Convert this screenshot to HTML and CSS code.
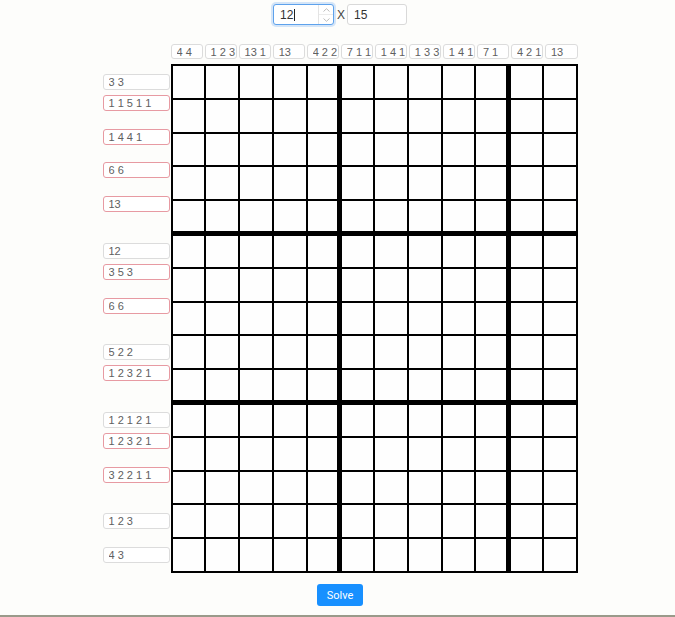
FILE: index.html
```html
<!DOCTYPE html>
<html>
<head>
<meta charset="utf-8">
<title>Nonogram</title>
<link rel="stylesheet" href="styles.css">
</head>
<body>
<div class="page">
  <div class="size-bar">
    <div class="num-input">
      <span class="num-val">12</span><span class="caret"></span>
      <span class="spin">
        <span class="spin-btn"><svg width="7" height="4" viewBox="0 0 7 4"><path d="M0.5 3.5 L3.5 0.7 L6.5 3.5" fill="none" stroke="#b5b5b5" stroke-width="0.9"/></svg></span>
        <span class="spin-btn"><svg width="7" height="4" viewBox="0 0 7 4"><path d="M0.5 0.5 L3.5 3.3 L6.5 0.5" fill="none" stroke="#b5b5b5" stroke-width="0.9"/></svg></span>
      </span>
    </div>
    <span class="times">X</span>
    <input class="size-input" type="text" value="15">
  </div>

  <div class="puzzle">
    <div class="corner"></div>
    <div class="col-clues">
      <input class="clue col-clue" value="4 4">
      <input class="clue col-clue" value="1 2 3">
      <input class="clue col-clue" value="13 1">
      <input class="clue col-clue" value="13">
      <input class="clue col-clue" value="4 2 2">
      <input class="clue col-clue" value="7 1 1">
      <input class="clue col-clue" value="1 4 1">
      <input class="clue col-clue" value="1 3 3">
      <input class="clue col-clue" value="1 4 1">
      <input class="clue col-clue" value="7 1">
      <input class="clue col-clue" value="4 2 1">
      <input class="clue col-clue" value="13">
    </div>

    <div class="row-clues">
      <div class="slot"><input class="clue row-clue" value="3 3"></div>
      <div class="slot"><input class="clue row-clue bad" value="1 1 5 1 1"><div class="err"></div></div>
      <div class="slot"><input class="clue row-clue bad" value="1 4 4 1"><div class="err"></div></div>
      <div class="slot"><input class="clue row-clue bad" value="6 6"><div class="err"></div></div>
      <div class="slot"><input class="clue row-clue bad" value="13"><div class="err"></div></div>
      <div class="slot"><input class="clue row-clue" value="12"></div>
      <div class="slot"><input class="clue row-clue bad" value="3 5 3"><div class="err"></div></div>
      <div class="slot"><input class="clue row-clue bad" value="6 6"><div class="err"></div></div>
      <div class="slot"><input class="clue row-clue" value="5 2 2"></div>
      <div class="slot"><input class="clue row-clue bad" value="1 2 3 2 1"><div class="err"></div></div>
      <div class="slot"><input class="clue row-clue" value="1 2 1 2 1"></div>
      <div class="slot"><input class="clue row-clue bad" value="1 2 3 2 1"><div class="err"></div></div>
      <div class="slot"><input class="clue row-clue bad" value="3 2 2 1 1"><div class="err"></div></div>
      <div class="slot"><input class="clue row-clue" value="1 2 3"></div>
      <div class="slot"><input class="clue row-clue" value="4 3"></div>
    </div>

    <div class="board">
      <div class="c"></div><div class="c"></div><div class="c"></div><div class="c"></div><div class="c"></div><div class="c"></div><div class="c"></div><div class="c"></div><div class="c"></div><div class="c"></div><div class="c"></div><div class="c"></div>
      <div class="c"></div><div class="c"></div><div class="c"></div><div class="c"></div><div class="c"></div><div class="c"></div><div class="c"></div><div class="c"></div><div class="c"></div><div class="c"></div><div class="c"></div><div class="c"></div>
      <div class="c"></div><div class="c"></div><div class="c"></div><div class="c"></div><div class="c"></div><div class="c"></div><div class="c"></div><div class="c"></div><div class="c"></div><div class="c"></div><div class="c"></div><div class="c"></div>
      <div class="c"></div><div class="c"></div><div class="c"></div><div class="c"></div><div class="c"></div><div class="c"></div><div class="c"></div><div class="c"></div><div class="c"></div><div class="c"></div><div class="c"></div><div class="c"></div>
      <div class="c"></div><div class="c"></div><div class="c"></div><div class="c"></div><div class="c"></div><div class="c"></div><div class="c"></div><div class="c"></div><div class="c"></div><div class="c"></div><div class="c"></div><div class="c"></div>
      <div class="c"></div><div class="c"></div><div class="c"></div><div class="c"></div><div class="c"></div><div class="c"></div><div class="c"></div><div class="c"></div><div class="c"></div><div class="c"></div><div class="c"></div><div class="c"></div>
      <div class="c"></div><div class="c"></div><div class="c"></div><div class="c"></div><div class="c"></div><div class="c"></div><div class="c"></div><div class="c"></div><div class="c"></div><div class="c"></div><div class="c"></div><div class="c"></div>
      <div class="c"></div><div class="c"></div><div class="c"></div><div class="c"></div><div class="c"></div><div class="c"></div><div class="c"></div><div class="c"></div><div class="c"></div><div class="c"></div><div class="c"></div><div class="c"></div>
      <div class="c"></div><div class="c"></div><div class="c"></div><div class="c"></div><div class="c"></div><div class="c"></div><div class="c"></div><div class="c"></div><div class="c"></div><div class="c"></div><div class="c"></div><div class="c"></div>
      <div class="c"></div><div class="c"></div><div class="c"></div><div class="c"></div><div class="c"></div><div class="c"></div><div class="c"></div><div class="c"></div><div class="c"></div><div class="c"></div><div class="c"></div><div class="c"></div>
      <div class="c"></div><div class="c"></div><div class="c"></div><div class="c"></div><div class="c"></div><div class="c"></div><div class="c"></div><div class="c"></div><div class="c"></div><div class="c"></div><div class="c"></div><div class="c"></div>
      <div class="c"></div><div class="c"></div><div class="c"></div><div class="c"></div><div class="c"></div><div class="c"></div><div class="c"></div><div class="c"></div><div class="c"></div><div class="c"></div><div class="c"></div><div class="c"></div>
      <div class="c"></div><div class="c"></div><div class="c"></div><div class="c"></div><div class="c"></div><div class="c"></div><div class="c"></div><div class="c"></div><div class="c"></div><div class="c"></div><div class="c"></div><div class="c"></div>
      <div class="c"></div><div class="c"></div><div class="c"></div><div class="c"></div><div class="c"></div><div class="c"></div><div class="c"></div><div class="c"></div><div class="c"></div><div class="c"></div><div class="c"></div><div class="c"></div>
      <div class="c"></div><div class="c"></div><div class="c"></div><div class="c"></div><div class="c"></div><div class="c"></div><div class="c"></div><div class="c"></div><div class="c"></div><div class="c"></div><div class="c"></div><div class="c"></div>
    </div>
  </div>

  <button class="solve" type="button">Solve</button>
</div>
<div class="bottom-line"></div>
</body>
</html>
```

FILE: styles.css
```css
html, body {
  margin: 0;
  padding: 0;
  background: #fdfdfb;
}

body {
  font-family: "Liberation Sans", Arial, sans-serif;
  color: #333;
  width: 675px;
  height: 617px;
  overflow: hidden;
}

.page {
  display: flex;
  flex-direction: column;
  align-items: center;
  padding: 4px 0 0 5px;
}

/* size bar */
.size-bar {
  display: flex;
  align-items: center;
  gap: 3px;
  height: 21px;
}

.num-input {
  width: 61px;
  height: 21px;
  box-sizing: border-box;
  border: 1px solid #5ea2ec;
  border-radius: 3px;
  box-shadow: 0 0 0 2px rgba(90, 160, 240, 0.25);
  background: #fff;
  display: flex;
  align-items: center;
  padding-left: 6px;
  font-size: 12px;
  color: #333;
}

.num-val {
  line-height: 1;
}

.caret {
  width: 1px;
  height: 12px;
  background: #222;
  margin-left: 1px;
}

.spin {
  margin-left: auto;
  width: 14px;
  height: 19px;
  border-left: 1px solid #e4e4e4;
  display: flex;
  flex-direction: column;
}

.spin-btn {
  flex: 1;
  display: flex;
  align-items: center;
  justify-content: center;
}

.spin-btn + .spin-btn {
  border-top: 1px solid #ececec;
}

.spin-btn svg {
  display: block;
}

.times {
  font-size: 12px;
  color: #444;
  width: 7px;
  text-align: center;
}

.size-input {
  width: 60px;
  height: 21px;
  box-sizing: border-box;
  border: 1px solid #d9d9d9;
  border-radius: 3px;
  background: #fff;
  padding: 0 6px;
  font-family: "Liberation Sans", Arial, sans-serif;
  font-size: 12px;
  color: #333;
  outline: none;
}

/* puzzle */
.puzzle {
  margin-top: 19px;
  display: grid;
  grid-template-columns: 68px 407px;
  grid-template-rows: 15px 509px;
  row-gap: 5px;
}

.clue {
  box-sizing: border-box;
  border: 1px solid #dcdcdc;
  border-radius: 3px;
  background: #fff;
  padding: 0 0 0 5px;
  margin: 0;
  font-family: "Liberation Sans", Arial, sans-serif;
  font-size: 11px;
  font-variant-numeric: tabular-nums;
  color: #606060;
  outline: none;
}

.col-clues {
  display: grid;
  grid-template-columns: repeat(12, 1fr);
  column-gap: 1.5px;
}

.col-clue {
  width: 100%;
  min-width: 0;
  height: 15px;
}

.row-clues {
  display: grid;
  grid-template-rows: repeat(15, minmax(0, 1fr));
  row-gap: 2px;
  padding: 2px 0;
  box-sizing: border-box;
  height: 509px;
}

.slot {
  min-height: 0;
  display: flex;
  flex-direction: column;
  justify-content: center;
  align-items: flex-start;
}

.row-clue {
  width: 67px;
  height: 16px;
  flex: none;
}

.row-clue.bad {
  border-color: #e79aa2;
}

.err {
  height: 26px;
  flex: none;
}

/* board */
.board {
  width: 407px;
  height: 509px;
  box-sizing: border-box;
  background: #000;
  padding: 2px;
  display: grid;
  grid-template-columns: repeat(12, 1fr);
  grid-template-rows: repeat(15, 1fr);
  gap: 2px;
}

.c {
  background: #fefefe;
}

.c:nth-child(12n+5),
.c:nth-child(12n+10) {
  margin-right: 2px;
}

.c:nth-child(12n+6),
.c:nth-child(12n+11) {
  margin-left: 1px;
}

.c:nth-child(n+49):nth-child(-n+60),
.c:nth-child(n+109):nth-child(-n+120) {
  margin-bottom: 2px;
}

.c:nth-child(n+61):nth-child(-n+72),
.c:nth-child(n+121):nth-child(-n+132) {
  margin-top: 1px;
}

/* button */
.solve {
  margin-top: 11px;
  width: 46px;
  height: 22px;
  border: none;
  border-radius: 3px;
  background: #1890ff;
  color: #fff;
  font-family: Roboto, "Liberation Sans", sans-serif;
  font-size: 11px;
  padding: 0;
  cursor: pointer;
}

.bottom-line {
  margin-top: 9px;
  height: 2px;
  background: #9a9a8a;
}
```
